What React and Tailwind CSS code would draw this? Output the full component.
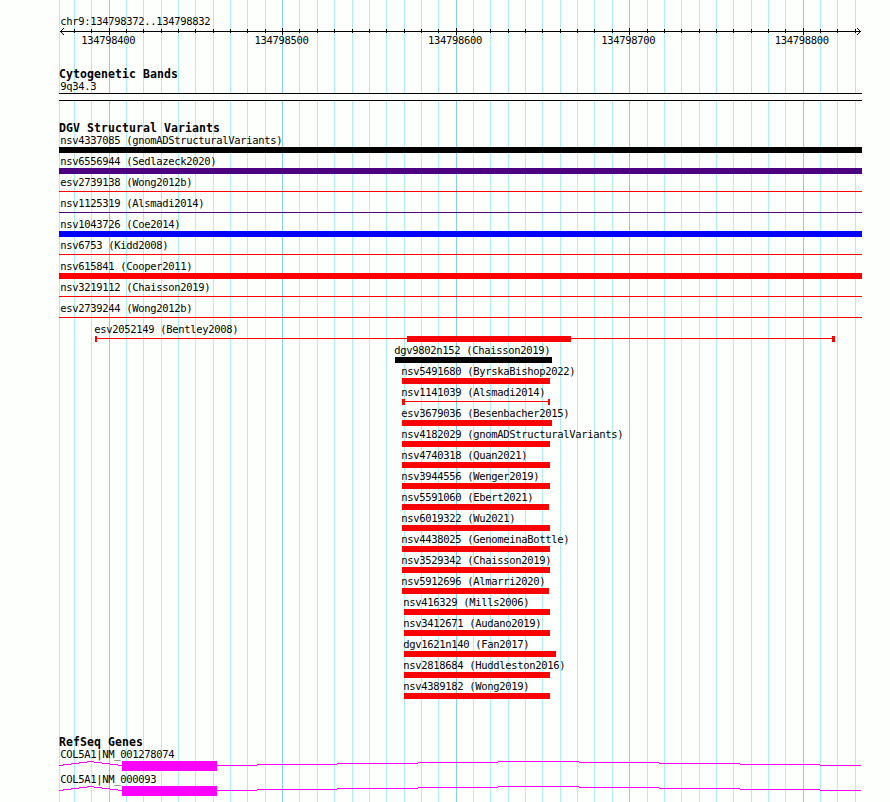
import React from "react";

const MAJOR = [109, 282, 456, 629, 803];
const MINOR = [
  59, 74, 91, 126, 143, 161, 178, 195, 213, 230, 247, 265, 299, 317, 334, 352, 369, 386, 404, 421,
  438, 473, 490, 508, 525, 542, 560, 577, 594, 612, 647, 664, 681, 699, 716, 733, 751, 768, 785, 820, 837, 855,
];

const RED = "#ff0000";
const INDIGO = "#4b0082";

const VARIANTS = [
  { name: "nsv4337085 (gnomADStructuralVariants)", from: 59, to: 862, color: "#000000" },
  { name: "nsv6556944 (Sedlazeck2020)", from: 59, to: 862, color: INDIGO },
  { name: "esv2739138 (Wong2012b)", from: 59, to: 862, color: RED, thin: true },
  { name: "nsv1125319 (Alsmadi2014)", from: 59, to: 862, color: INDIGO, thin: true },
  { name: "nsv1043726 (Coe2014)", from: 59, to: 862, color: "#0000ff" },
  { name: "nsv6753 (Kidd2008)", from: 59, to: 862, color: RED, thin: true },
  { name: "nsv615841 (Cooper2011)", from: 59, to: 862, color: RED },
  { name: "nsv3219112 (Chaisson2019)", from: 59, to: 862, color: RED, thin: true },
  { name: "esv2739244 (Wong2012b)", from: 59, to: 862, color: RED, thin: true },
  { name: "esv2052149 (Bentley2008)", from: 95, to: 835, color: RED, thin: true, blocks: [[95, 97], [407, 571], [832, 835]] },
  { name: "dgv9802n152 (Chaisson2019)", from: 395, to: 552, color: "#000000" },
  { name: "nsv5491680 (ByrskaBishop2022)", from: 402, to: 550, color: RED },
  { name: "nsv1141039 (Alsmadi2014)", from: 402, to: 550, color: RED, thin: true, blocks: [[402, 405], [548, 550]] },
  { name: "esv3679036 (Besenbacher2015)", from: 402, to: 552, color: RED },
  { name: "nsv4182029 (gnomADStructuralVariants)", from: 402, to: 550, color: RED },
  { name: "nsv4740318 (Quan2021)", from: 402, to: 550, color: RED },
  { name: "nsv3944556 (Wenger2019)", from: 402, to: 550, color: RED },
  { name: "nsv5591060 (Ebert2021)", from: 402, to: 549, color: RED },
  { name: "nsv6019322 (Wu2021)", from: 402, to: 550, color: RED },
  { name: "nsv4438025 (GenomeinaBottle)", from: 402, to: 550, color: RED },
  { name: "nsv3529342 (Chaisson2019)", from: 402, to: 550, color: RED },
  { name: "nsv5912696 (Almarri2020)", from: 402, to: 549, color: RED },
  { name: "nsv416329 (Mills2006)", from: 404, to: 550, color: RED },
  { name: "nsv3412671 (Audano2019)", from: 404, to: 550, color: RED },
  { name: "dgv1621n140 (Fan2017)", from: 404, to: 556, color: RED },
  { name: "nsv2818684 (Huddleston2016)", from: 404, to: 550, color: RED },
  { name: "nsv4389182 (Wong2019)", from: 404, to: 550, color: RED },
];

// Stepped intron segments: [start, end, height below the top of the glyph]
const INTRONS = [
  [59, 63, 4], [63, 71, 3], [71, 79, 2], [79, 87, 1], [87, 94, 0], [94, 102, 1], [102, 110, 2],
  [110, 118, 3], [118, 122, 4], [217, 257, 4], [257, 337, 3], [337, 418, 2], [418, 498, 1],
  [498, 579, 0], [579, 659, 1], [659, 740, 2], [740, 820, 3], [820, 861, 4],
];

const LABEL =
  "block whitespace-pre font-['DejaVu_Sans_Mono','Liberation_Mono',monospace] text-[10.5px] tracking-[-0.321px] leading-[13px] h-[13px]";

function Grid() {
  return (
    <svg className="absolute inset-0" width="890" height="802" shapeRendering="crispEdges">
      {MINOR.map((x) => (
        <rect key={x} x={x} y="0" width="1" height="802" fill="#afeeee" />
      ))}
      {MAJOR.map((x) => (
        <rect key={x} x={x} y="0" width="1" height="802" fill="#87ceeb" />
      ))}
    </svg>
  );
}

function Heading({ children }) {
  return (
    <h2 className="ml-[59px] h-[13px] whitespace-pre font-['DejaVu_Sans_Mono','Liberation_Mono',monospace] text-[11.5px] font-bold leading-[13px] tracking-[0.077px]">
      {children}
    </h2>
  );
}

function Ruler() {
  return (
    <section className="h-[67px] pt-[15px]">
      <span className={`${LABEL} ml-[60.2px]`}>chr9:134798372..134798832</span>
      <svg className="block" width="890" height="7" shapeRendering="crispEdges">
        <rect x="60" y="3" width="801" height="1" />
        <path d="M60 3h1v1h-1zM61 2h1v3h-1zM62 1h1v1h-1zM62 5h1v1h-1zM63 0h1v1h-1zM63 6h1v1h-1z" />
        <path d="M860 3h1v1h-1zM859 2h1v3h-1zM858 1h1v1h-1zM858 5h1v1h-1zM857 0h1v1h-1zM857 6h1v1h-1z" />
        {MINOR.slice(1).map((x) => (
          <rect key={x} x={x} y="1" width="1" height="4" />
        ))}
        {MAJOR.map((x) => (
          <rect key={x} x={x} y="0" width="1" height="7" />
        ))}
      </svg>
      <div className="ml-[81.2px] -mt-px flex gap-x-[119.4px]">
        {["134798400", "134798500", "134798600", "134798700", "134798800"].map((t) => (
          <span key={t} className={`${LABEL} w-[54px] shrink-0`}>{t}</span>
        ))}
      </div>
    </section>
  );
}

function Variant({ name, from, to, color, thin, blocks }) {
  return (
    <div className="h-[21px]">
      <span className={LABEL} style={{ marginLeft: from === 59 ? 60.2 : from - 0.8 }}>{name}</span>
      <svg className="block" width="890" height="6" shapeRendering="crispEdges" fill={color}>
        <rect x={from} y={thin ? 2 : 0} width={to - from} height={thin ? 1 : 6} />
        {(blocks || []).map(([a, b]) => (
          <rect key={a} x={a} y="0" width={b - a} height="6" />
        ))}
      </svg>
    </div>
  );
}

function Gene({ name }) {
  return (
    <div className="h-[25px]">
      <span className={`${LABEL} ml-[60.2px]`}>{name}</span>
      <svg className="block" width="890" height="10" shapeRendering="crispEdges" fill="#ff00ff">
        {INTRONS.map(([a, b, y]) => (
          <rect key={a} x={a} y={y} width={b - a} height="1" />
        ))}
        <rect x="122" y="0" width="95" height="10" />
      </svg>
    </div>
  );
}

export default function App() {
  return (
    <main className="relative h-[802px] w-[890px] overflow-hidden bg-[#fdfffc] text-black">
      <Grid />
      <div className="relative flex flex-col">
        <Ruler />
        <section className="h-[54px] pt-px">
          <Heading>Cytogenetic Bands</Heading>
          <span className={`${LABEL} -mt-px ml-[60.2px]`}>9q34.3</span>
          <div className="ml-[59px] h-[8px] w-[803px] border-y border-black bg-[#fdfffc]" />
        </section>
        <section className="h-[614px] pt-px">
          <Heading>DGV Structural Variants</Heading>
          <div className="-mt-px">
            {VARIANTS.map((v) => (
              <Variant key={v.name} {...v} />
            ))}
          </div>
        </section>
        <section className="pt-px">
          <Heading>RefSeq Genes</Heading>
          <div className="-mt-px">
            <Gene name="COL5A1|NM_001278074" />
            <Gene name="COL5A1|NM_000093" />
          </div>
        </section>
      </div>
    </main>
  );
}
